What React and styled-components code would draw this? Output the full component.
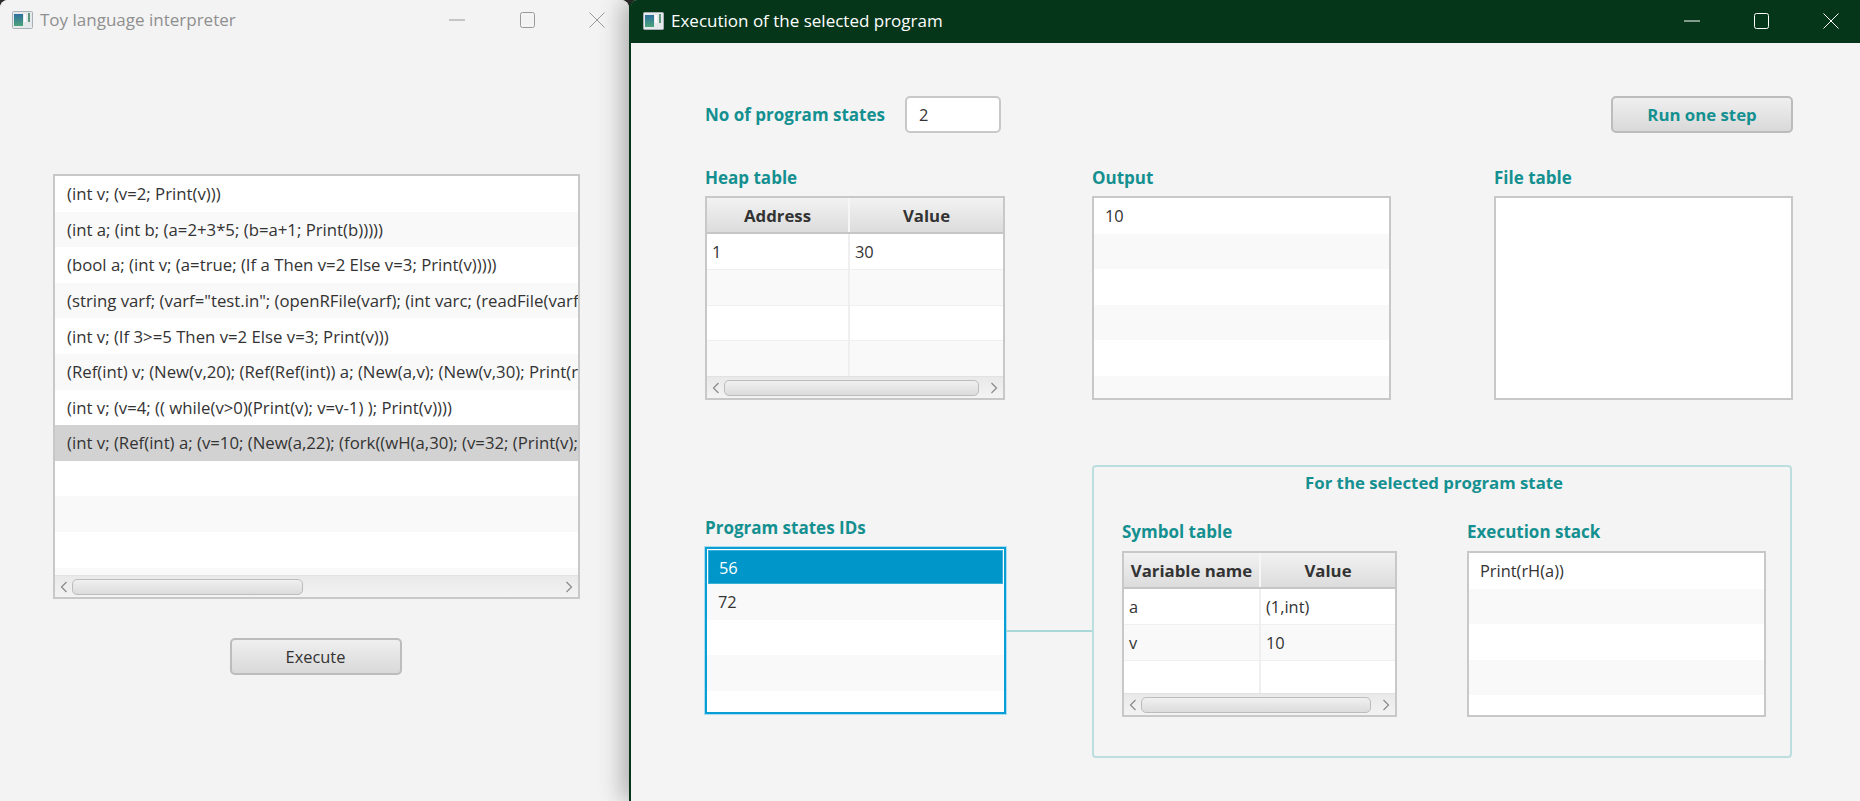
import React from "react";
import styled, { createGlobalStyle } from "styled-components";

const programs = [
  "(int v; (v=2; Print(v)))",
  "(int a; (int b; (a=2+3*5; (b=a+1; Print(b)))))",
  "(bool a; (int v; (a=true; (If a Then v=2 Else v=3; Print(v)))))",
  '(string varf; (varf="test.in"; (openRFile(varf); (int varc; (readFile(varf,varc); (Print(varc); closeRFile(varf)))))))',
  "(int v; (If 3>=5 Then v=2 Else v=3; Print(v)))",
  "(Ref(int) v; (New(v,20); (Ref(Ref(int)) a; (New(a,v); (New(v,30); Print(rH(rH(a))))))))",
  "(int v; (v=4; (( while(v>0)(Print(v); v=v-1) ); Print(v))))",
  "(int v; (Ref(int) a; (v=10; (New(a,22); (fork((wH(a,30); (v=32; (Print(v); Print(rH(a)))))); (Print(v); Print(rH(a))))))))",
  "", "", "", "",
];

const GlobalStyle = createGlobalStyle`
  html, body {
    margin: 0;
    padding: 0;
    background: #2c2c2c;
    overflow: hidden;
  }
  * { box-sizing: border-box; }
`;

const Desktop = styled.div`
  display: flex;
  width: 1860px;
  height: 801px;
  font-family: "Open Sans", "Liberation Sans", sans-serif;
  font-size: 16.4px;
  color: #333;
`;

const Window = styled.div`
  display: flex;
  flex-direction: column;
  height: 100%;
  background: #f4f4f4;
  border-radius: 8px 8px 0 0;
  overflow: hidden;
`;

const LeftWindow = styled(Window)`
  width: 629px;
  flex: none;
  background: #f3f3f3;
`;

const RightWindow = styled(Window)`
  position: relative;
  width: 1231px;
  flex: none;
  border-left: 2px solid #05361a;
  box-shadow: -6px 0 24px rgba(0, 0, 0, 0.3);
  overflow: visible;
`;

const TitleBar = styled.div`
  display: flex;
  align-items: center;
  flex: none;
  height: 43px;
  padding-left: 12px;
  padding-bottom: ${(p) => (p.$active ? "2px" : "4px")};
  background: ${(p) => (p.$active ? "#05361a" : "#f3f3f3")};
  color: ${(p) => (p.$active ? "#fff" : "#8f8f8f")};
  border-radius: ${(p) => (p.$active ? "6px 0 0 0" : "0")};
`;

const TitleText = styled.span`
  margin-left: 7px;
  font-size: 17px;
  flex: 1;
  white-space: nowrap;
`;

const Controls = styled.div`
  display: flex;
  align-items: center;
  flex: none;
  width: ${(p) => p.$width}px;
  justify-content: space-between;
  margin-right: ${(p) => p.$right}px;
`;

const AppIcon = () => (
  <svg width="21" height="18" viewBox="0 0 21 18" style={{ flex: "none" }}>
    <defs>
      <linearGradient id="appfill" x1="0" y1="0" x2="0" y2="1">
        <stop offset="0" stopColor="#2f6fa0" />
        <stop offset="1" stopColor="#4aa478" />
      </linearGradient>
    </defs>
    <rect x="0.5" y="0.5" width="20" height="17" rx="1" fill="#e6e9ec" stroke="#a9b0b6" />
    <rect x="2" y="3" width="9" height="12" fill="url(#appfill)" />
    <rect x="12" y="3" width="2" height="8" fill="#fff" />
    <rect x="16" y="2" width="2" height="9" fill="#5d9a7d" />
  </svg>
);

const MinimizeIcon = ({ color }) => (
  <svg width="16" height="16" viewBox="0 0 16 16">
    <path d="M0 8h16" stroke={color} strokeWidth="1" />
  </svg>
);

const MaximizeIcon = ({ color }) => (
  <svg width="15" height="16" viewBox="0 0 15 16">
    <rect x="0.5" y="0.5" width="14" height="15" rx="2" fill="none" stroke={color} />
  </svg>
);

const CloseIcon = ({ color }) => (
  <svg width="16" height="16" viewBox="0 0 16 16">
    <path d="M0.5 0.5l15 15M15.5 0.5l-15 15" stroke={color} strokeWidth="1" />
  </svg>
);

const WindowControls = ({ color, width, right }) => (
  <Controls $width={width} $right={right}>
    <MinimizeIcon color={color} />
    <MaximizeIcon color={color} />
    <CloseIcon color={color} />
  </Controls>
);

const LeftBody = styled.div`
  display: flex;
  flex-direction: column;
  align-items: center;
  width: 527px;
  margin: 131px 0 0 53px;
`;

const Box = styled.div`
  display: flex;
  flex-direction: column;
  width: ${(p) => p.$width}px;
  height: ${(p) => p.$height}px;
  background: #fff;
  border: 2px solid #c8c8c8;
  overflow: hidden;
`;

const Rows = styled.div`
  flex: 1;
  min-height: 0;
  overflow: hidden;
`;

const Row = styled.div`
  display: flex;
  align-items: center;
  height: 35.6px;
  padding-left: 11px;
  white-space: nowrap;
  overflow: hidden;
  background: ${(p) => (p.$selected ? "#d2d2d2" : "#fff")};
  &:nth-child(even) {
    background: ${(p) => (p.$selected ? "#d2d2d2" : "#f9f9f9")};
  }
`;

const ProgramRow = styled(Row)`
  font-size: 16.75px;
  padding-left: 12px;
`;

const ScrollTrack = styled.div`
  display: flex;
  align-items: center;
  flex: none;
  height: 22px;
  padding: 0 5px;
  background: linear-gradient(#e9e9e9, #f3f3f3);
  border-top: 1px solid #e2e2e2;
`;

const ScrollThumb = styled.div`
  flex: none;
  width: ${(p) => p.$width}px;
  height: 16px;
  margin-left: 4px;
  border: 1.5px solid #bcbcbc;
  border-radius: 5px;
  background: linear-gradient(#f0f0f0, #dcdcdc);
`;

const ArrowEnd = styled.div`
  display: flex;
  margin-left: auto;
`;

const Arrow = ({ dir }) => (
  <svg width="8" height="12" viewBox="0 0 8 12" style={{ flex: "none" }}>
    <path d={dir === "left" ? "M6.5 1L1.5 6l5 5" : "M1.5 1l5 5-5 5"} fill="none" stroke="#8a8a8a" strokeWidth="1.2" />
  </svg>
);

const ScrollBar = ({ thumb }) => (
  <ScrollTrack>
    <Arrow dir="left" />
    <ScrollThumb $width={thumb} />
    <ArrowEnd><Arrow dir="right" /></ArrowEnd>
  </ScrollTrack>
);

const Button = styled.button`
  flex: none;
  width: ${(p) => p.$width}px;
  height: 37px;
  padding: 0;
  font-family: inherit;
  font-size: ${(p) => (p.$accent ? "16.8px" : "16.4px")};
  font-weight: ${(p) => (p.$accent ? 700 : 400)};
  color: ${(p) => (p.$accent ? "#149090" : "#333")};
  background: linear-gradient(#efefef, #d9d9d9);
  border: 2px solid #bcbcbc;
  border-radius: 5px;
`;

const ExecuteButton = styled(Button)`
  margin-top: 39px;
  margin-right: 2px;
`;

const RightBody = styled.div`
  display: flex;
  flex-direction: column;
  flex: 1;
  padding: 53px 67px 0 74px;
`;

const TopBar = styled.div`
  display: flex;
  align-items: center;
  height: 37px;
`;

const Label = styled.div`
  font-size: 17px;
  font-weight: 700;
  color: #149090;
  white-space: nowrap;
`;

const PanelLabel = styled(Label)`
  height: 22px;
  line-height: 22px;
  margin-bottom: ${(p) => p.$gap ?? 7}px;
`;

const StatesField = styled.div`
  display: flex;
  align-items: center;
  width: 96px;
  height: 37px;
  margin-left: 20px;
  padding-left: 12px;
  background: #fff;
  border: 2px solid #c8c8c8;
  border-radius: 5px;
`;

const RunButton = styled(Button)`
  margin-left: auto;
`;

const TablesGrid = styled.div`
  display: grid;
  grid-template-columns: 387px 402px 299px;
  margin-top: 34px;
`;

const HeadRow = styled.div`
  display: grid;
  grid-template-columns: ${(p) => p.$cols};
  flex: none;
  height: 36px;
  border-bottom: 2px solid #c6c6c6;
`;

const HeadCell = styled.div`
  display: flex;
  align-items: center;
  justify-content: center;
  font-weight: 700;
  font-size: 16.8px;
  white-space: nowrap;
  background: linear-gradient(#f2f2f2, #dcdcdc);
  & + & {
    border-left: 2px solid #f6f6f6;
  }
`;

const TableRow = styled.div`
  display: grid;
  grid-template-columns: ${(p) => p.$cols};
  height: 35.8px;
  background: #fff;
  border-bottom: 1.5px solid #efefef;
  &:nth-child(even) {
    background: #f9f9f9;
  }
`;

const TableCell = styled.div`
  display: flex;
  align-items: center;
  padding-left: 5px;
  white-space: nowrap;
  & + & {
    border-left: 2px solid #efefef;
  }
`;

const DataTable = ({ width, height, cols, head, rows, thumb }) => (
  <Box $width={width} $height={height}>
    <HeadRow $cols={cols}>
      {head.map((h) => <HeadCell key={h}>{h}</HeadCell>)}
    </HeadRow>
    <Rows>
      {rows.map((r, i) => (
        <TableRow key={i} $cols={cols}>
          <TableCell>{r[0]}</TableCell>
          <TableCell>{r[1]}</TableCell>
        </TableRow>
      ))}
    </Rows>
    <ScrollBar thumb={thumb} />
  </Box>
);

const ListBox = ({ width, height, items }) => (
  <Box $width={width} $height={height}>
    <Rows>
      {items.map((t, i) => <Row key={i}>{t}</Row>)}
    </Rows>
  </Box>
);

const LowerSection = styled.div`
  display: flex;
  margin-top: 65px;
`;

const StatesColumn = styled.div`
  display: flex;
  flex-direction: column;
  align-self: flex-end;
  margin-bottom: 44px;
`;

const StatesRow = styled.div`
  display: flex;
  align-items: center;
`;

const FocusBox = styled(Box)`
  border: 2px solid #0a9fd4;
  box-shadow: 0 0 0 1px #a9dcf0;
  padding-top: 1px;
  flex: none;
`;

const SelectedRow = styled(Row)`
  margin: 0 1px;
  background: #0096c9;
  color: #fff;
  box-shadow: inset 0 0 0 1px #3bb0d8;
  height: 34px;
`;

const Connector = styled.div`
  width: 86px;
  height: 2px;
  background: #a9d8d8;
`;

const GroupBox = styled.div`
  display: flex;
  flex-direction: column;
  width: 700px;
  height: 293px;
  border: 2px solid #bddede;
  border-radius: 4px;
`;

const GroupTitle = styled(Label)`
  text-align: center;
  font-size: 16.8px;
  margin-top: 5px;
  padding-right: 16px;
  height: 22px;
  line-height: 22px;
`;

const GroupPanels = styled.div`
  display: grid;
  grid-template-columns: 345px 299px;
  margin: 27px 0 0 28px;
`;

const App = () => (
  <Desktop>
    <GlobalStyle />
    <LeftWindow>
      <TitleBar>
        <AppIcon />
        <TitleText>Toy language interpreter</TitleText>
        <WindowControls color="#999" width={156} right={24} />
      </TitleBar>
      <LeftBody>
        <Box $width={527} $height={425}>
          <Rows>
            {programs.map((p, i) => <ProgramRow key={i} $selected={i === 7}>{p}</ProgramRow>)}
          </Rows>
          <ScrollBar thumb={231} />
        </Box>
        <ExecuteButton $width={172}>Execute</ExecuteButton>
      </LeftBody>
    </LeftWindow>

    <RightWindow>
      <TitleBar $active>
        <AppIcon />
        <TitleText>Execution of the selected program</TitleText>
        <WindowControls color="#fff" width={155} right={21} />
      </TitleBar>
      <RightBody>
        <TopBar>
          <Label>No of program states</Label>
          <StatesField>2</StatesField>
          <RunButton $accent $width={182}>Run one step</RunButton>
        </TopBar>
        <TablesGrid>
          <div>
            <PanelLabel>Heap table</PanelLabel>
            <DataTable width={300} height={204} cols="141px 1fr" head={["Address", "Value"]}
              rows={[["1", "30"], ["", ""], ["", ""], ["", ""]]} thumb={255} />
          </div>
          <div>
            <PanelLabel>Output</PanelLabel>
            <ListBox width={299} height={204} items={["10", "", "", "", "", ""]} />
          </div>
          <div>
            <PanelLabel>File table</PanelLabel>
            <Box $width={299} $height={204} />
          </div>
        </TablesGrid>
        <LowerSection>
          <StatesColumn>
            <PanelLabel $gap={8}>Program states IDs</PanelLabel>
            <StatesRow>
              <FocusBox $width={301} $height={167}>
                <Rows>
                  <SelectedRow>56</SelectedRow>
                  <Row>72</Row>
                  <Row />
                  <Row />
                  <Row />
                </Rows>
              </FocusBox>
              <Connector />
            </StatesRow>
          </StatesColumn>
          <GroupBox>
            <GroupTitle>For the selected program state</GroupTitle>
            <GroupPanels>
              <div>
                <PanelLabel $gap={8}>Symbol table</PanelLabel>
                <DataTable width={275} height={166} cols="135px 1fr" head={["Variable name", "Value"]}
                  rows={[["a", "(1,int)"], ["v", "10"], ["", ""]]} thumb={230} />
              </div>
              <div>
                <PanelLabel $gap={8}>Execution stack</PanelLabel>
                <ListBox width={299} height={166} items={["Print(rH(a))", "", "", "", ""]} />
              </div>
            </GroupPanels>
          </GroupBox>
        </LowerSection>
      </RightBody>
    </RightWindow>
  </Desktop>
);

export default App;
